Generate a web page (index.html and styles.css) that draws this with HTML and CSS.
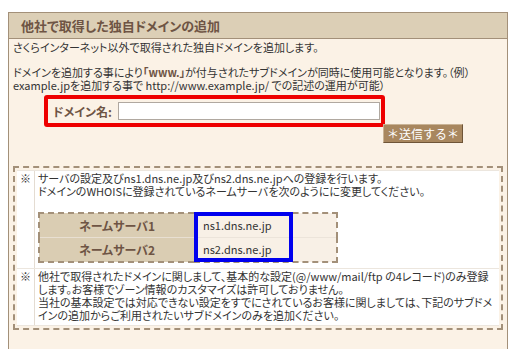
FILE: index.html
```html
<!DOCTYPE html>
<html>
  <head>
    <title>他社で取得した独自ドメインの追加</title>
    <link rel="stylesheet" href="styles.css">
  </head>
  <body>
    <div id="panel">
      <h2 class="panel-title">他社で取得した独自ドメインの追加</h2>
      <div class="panel-body">
        <p class="lead">さくらインターネット以外で取得された独自ドメインを追加します。</p>
        <p class="lead">ドメインを追加する事により<b class="www">「www.」</b>が付与されたサブドメインが同時に使用可能となります。（例）<br>example.jpを追加する事で http://www.example.jp/ での記述の運用が可能）</p>
        <form class="domain-form">
          <div class="domain-field">
            <label for="domain">ドメイン名:</label>
            <input type="text" id="domain" name="domain">
          </div>
          <div class="actions">
            <button type="submit" class="send-button">＊送信する＊</button>
          </div>
        </form>
        <div class="notes">
          <table class="notes-table">
            <tr>
              <td class="mark">※</td>
              <td>
                サーバの設定及びns1.dns.ne.jp及びns2.dns.ne.jpへの登録を行います。<br>
                ドメインのWHOISに登録されているネームサーバを次のようにに変更してください。
                <div class="ns-wrap">
                  <table class="ns-table">
                    <tr>
                      <th>ネームサーバ1</th>
                      <td>ns1.dns.ne.jp</td>
                    </tr>
                    <tr>
                      <th>ネームサーバ2</th>
                      <td>ns2.dns.ne.jp</td>
                    </tr>
                  </table>
                  <div class="ns-highlight"></div>
                </div>
              </td>
            </tr>
            <tr>
              <td class="mark">※</td>
              <td>
                他社で取得されたドメインに関しまして、基本的な設定(@/www/mail/ftp の4レコード)のみ登録します。お客様でゾーン情報のカスタマイズは許可しておりません。<br>
                当社の基本設定では対応できない設定をすでにされているお客様に関しましては、下記のサブドメインの追加からご利用されたいサブドメインのみを追加ください。
              </td>
            </tr>
          </table>
        </div>
      </div>
    </div>
  </body>
</html>
```

FILE: styles.css
```css
/* base */
body {
  margin: 0;
  background-color: #ffffff;
  font-family: "Noto Sans CJK JP", "DejaVu Sans", sans-serif;
  font-size: 11px;
  color: #333333;
  font-feature-settings: "palt";
}
/* panel */
#panel {
  width: 498px;
  margin: 12px 0 0 8px;
  border: 1px solid #a39079;
  background-color: #fbf2e6;
}
.panel-title {
  margin: 0;
  height: 25px;
  line-height: 25px;
  padding-left: 12px;
  font-size: 13px;
  font-weight: bold;
  color: #6e5444;
  background-color: #dccfb6;
  border-bottom: 1px solid #a39079;
}
.panel-body {
  padding: 2px 4px 19px 4px;
}
.lead {
  margin: 0 0 12px 0;
  line-height: 13px;
}
.www {
  color: #6e5444;
}
/* domain form */
.domain-form {
  margin-top: -9px;
}
.domain-field {
  display: flex;
  align-items: center;
  width: 327px;
  height: 24px;
  margin-left: 31px;
  padding: 0 1px 0 5px;
  border: 4px solid #ee0000;
  border-radius: 3px;
  background-color: #fbf2e6;
}
.domain-field label {
  font-weight: bold;
  font-size: 12px;
  color: #6e5444;
  margin-right: 6px;
}
.domain-field input {
  flex: 1;
  height: 14px;
  border: 1px solid #b0a8a0;
  padding: 1px 2px;
}
.actions {
  display: flex;
  justify-content: flex-end;
  padding-right: 40px;
  margin-top: -3px;
}
.send-button {
  width: 80px;
  height: 19px;
  padding: 0;
  font-family: inherit;
  font-size: 12px;
  color: #ffffff;
  background-color: #a8875f;
  border: 1px solid;
  border-color: #c9b395 #6e5538 #6e5538 #c9b395;
}
/* notes */
.notes {
  margin-top: 23px;
  border: 2px dashed #a39079;
  padding: 2px;
}
.notes-table {
  width: 100%;
  border-collapse: separate;
  border-spacing: 0 1px;
  background-color: #ece6de;
}
.notes-table > tbody > tr > td {
  background-color: #ffffff;
  vertical-align: top;
  line-height: 13px;
  padding: 1px 3px 3px 3px;
}
.notes-table > tbody > tr > td.mark {
  width: 11px;
  text-align: center;
  border-right: 1px solid #e4dcd2;
}
.ns-wrap {
  position: relative;
  width: 300px;
  margin: 14px 0 2px 0;
}
.ns-table {
  width: 300px;
  border: 2px dashed #a39079;
  border-collapse: collapse;
}
.ns-table th {
  width: 154px;
  height: 23px;
  padding: 0;
  font-size: 12px;
  color: #6e5444;
  background-color: #dacdb3;
  border-bottom: 1px solid #e8dfd2;
}
.ns-table td {
  padding: 0 0 0 9px;
  background-color: #f8f0e6;
  border-bottom: 1px solid #ece4da;
}
/* highlight box over the name server values */
.ns-highlight {
  position: absolute;
  left: 156px;
  top: 0;
  width: 91px;
  height: 42px;
  border: 4px solid #0000ee;
}
```
